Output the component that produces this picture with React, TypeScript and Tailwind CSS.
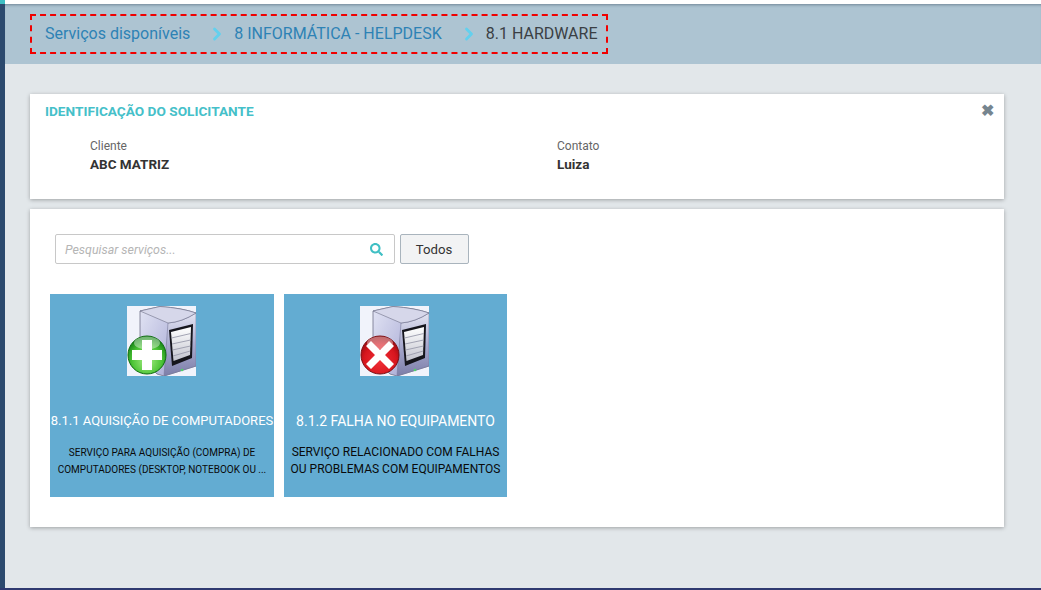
import { ChevronRight } from 'lucide-react';
import { FaSearch } from 'react-icons/fa';

// Server tower drawing shared by both service tiles
function ServerIcon({ kind }: { kind: 'add' | 'error' }) {
  const id = kind === 'add' ? 'a' : 'e';
  return (
    <svg viewBox="0 0 69 70" className={kind === 'add' ? 'mr-[1px] block h-[70px] w-[69px]' : 'mr-[2px] block h-[70px] w-[69px]'}>
      <defs>
        <linearGradient id={`side-${id}`} x1="0" y1="0" x2="1" y2="0.6">
          <stop offset="0" stopColor="#e2e4f4" />
          <stop offset="1" stopColor="#a0a2d0" />
        </linearGradient>
        <linearGradient id={`front-${id}`} x1="0" y1="0" x2="0" y2="1">
          <stop offset="0" stopColor="#e4e5f2" />
          <stop offset="0.5" stopColor="#a9abcf" />
          <stop offset="1" stopColor="#7c7ea8" />
        </linearGradient>
        <linearGradient id={`bay-${id}`} x1="0" y1="0" x2="0" y2="1">
          <stop offset="0" stopColor="#ffffff" />
          <stop offset="1" stopColor="#c2c3ce" />
        </linearGradient>
        <radialGradient id={`ball-${id}`} cx="0.5" cy="0.65" r="0.65">
          {kind === 'add' ? <stop offset="0" stopColor="#a6ec86" /> : <stop offset="0" stopColor="#f03038" />}
          {kind === 'add' ? <stop offset="0.6" stopColor="#4cc436" /> : <stop offset="0.65" stopColor="#d8161e" />}
          {kind === 'add' ? <stop offset="1" stopColor="#0c7a10" /> : <stop offset="1" stopColor="#8e0a10" />}
        </radialGradient>
      </defs>
      <rect width="69" height="70" fill="#f1f3fb" />
      <path d="M13 5 L33 0.5 Q55 2 69 7 L69 60 L37 70 L30 68 L13 50 Z" fill={`url(#side-${id})`} stroke="#6f7088" strokeWidth="0.8" />
      <path d="M41 17 Q55 16 69 7 L69 60 L37 70 Z" fill={`url(#front-${id})`} stroke="#77789a" strokeWidth="0.6" />
      <path d="M13 5 L33 0.5 Q55 2 69 7 Q55 16 41 17 Z" fill="#d6d7ea" stroke="#6f7088" strokeWidth="0.6" />
      <path d="M42 24 L66 18 L65 52 L45 60 Z" fill="#15151c" />
      <path d="M44 26 L64 21 L63 49 L46.5 55 Z" fill={`url(#bay-${id})`} />
      <path d="M44.5 32 L63.8 27.5 M45 38 L63.6 34 M45.5 44 L63.4 40 M46 50 L63.2 45" stroke="#9a9bab" strokeWidth="0.9" fill="none" />
      <circle cx="55" cy="64" r="1.3" fill="#4fd06a" />
      <circle cx="20" cy="49" r="19" fill={`url(#ball-${id})`} stroke={kind === 'add' ? '#0b6a0d' : '#7c0a10'} strokeWidth="1" />
      <ellipse cx="20" cy="37" rx="13" ry="6.5" fill="#ffffff" opacity="0.4" />
      {kind === 'add' ? (
        <path d="M15 34 H25 V44 H35 V54 H25 V64 H15 V54 H5 V44 H15 Z" fill="#ffffff" />
      ) : (
        <path d="M11 35 L20 44 L29 35 L34 40 L25 49 L34 58 L29 63 L20 54 L11 63 L6 58 L15 49 L6 40 Z" fill="#ffffff" />
      )}
    </svg>
  );
}

interface Service {
  code: string;
  kind: 'add' | 'error';
  title: string;
  description: string[];
}

const SERVICES: Service[] = [
  {
    code: '8.1.1',
    kind: 'add',
    title: 'AQUISIÇÃO DE COMPUTADORES',
    description: ['SERVIÇO PARA AQUISIÇÃO (COMPRA) DE', 'COMPUTADORES (DESKTOP, NOTEBOOK OU ...'],
  },
  {
    code: '8.1.2',
    kind: 'error',
    title: 'FALHA NO EQUIPAMENTO',
    description: ['SERVIÇO RELACIONADO COM FALHAS', 'OU PROBLEMAS COM EQUIPAMENTOS'],
  },
];

function ServiceTile({ service }: { service: Service }) {
  const small = service.kind === 'add';
  return (
    <div className={small ? 'flex h-[203px] w-[224px] flex-col items-center bg-[#63acd2] pt-3' : 'flex h-[203px] w-[223px] flex-col items-center bg-[#63acd2] pt-3'}>
      <ServerIcon kind={service.kind} />
      <div className={small ? 'mt-[36px] whitespace-nowrap text-[13px] leading-[18px] text-white' : 'mt-[36px] whitespace-nowrap text-[14px] leading-[18px] text-white'}>
        {service.code} {service.title}
      </div>
      <div
        className={
          small
            ? 'mt-[14px] text-center text-[10px] leading-[17px] whitespace-nowrap text-[#0a0a0a]'
            : 'mt-[14px] text-center text-[12px] leading-[17px] whitespace-nowrap text-[#0a0a0a]'
        }
      >
        {service.description.map((line) => (
          <div key={line}>{line}</div>
        ))}
      </div>
    </div>
  );
}

export default function App() {
  return (
    <div className="flex h-[590px] w-full flex-col overflow-hidden bg-[#e2e7ea] font-['Roboto',sans-serif]">
      <div className="flex min-h-0 flex-1">
        <div className="flex w-[5px] flex-col bg-[#2c4a6e]">
          <div className="h-[4px] bg-[#3fbfc4]" />
        </div>
        <div className="min-w-0 flex-1">
          <div className="h-[4px] bg-white" />
          <header className="flex h-[60px] items-center bg-[#adc4d2] pl-[25px] shadow-[inset_0_3px_3px_-2px_rgba(60,80,100,0.55)]">
            <nav className="flex h-[40px] w-[578px] items-center border-2 border-dashed border-[#f00000] pl-[13px] text-[16px]">
              <span className="text-[#2d82b5]">Serviços disponíveis</span>
              <ChevronRight className="ml-[17px] mr-[7px] h-[20px] w-[20px] text-[#63d0ee]" strokeWidth={3.5} />
              <span className="text-[#2d82b5]">8 INFORMÁTICA - HELPDESK</span>
              <ChevronRight className="ml-[17px] mr-[7px] h-[20px] w-[20px] text-[#63d0ee]" strokeWidth={3.5} />
              <span className="text-[#3a3f44]">8.1 HARDWARE</span>
            </nav>
          </header>

          <main className="flex flex-col gap-[10px] pl-[25px] pr-[37px] pt-[30px]">
            <section className="relative h-[105px] bg-white pl-[15px] pt-[10px] shadow-[0_1px_4px_rgba(0,0,0,0.3)]">
              <h2 className="text-[13.65px] leading-[15px] font-bold text-[#45c0c9]">IDENTIFICAÇÃO DO SOLICITANTE</h2>
              <span className="absolute right-[10px] top-[8px] text-[16px] leading-[18px] font-bold text-[#76858f]">✖</span>
              <div className="mt-[20px] flex pl-[45px] leading-[15px]">
                <div className="w-[467px]">
                  <div className="text-[12px] text-[#666]">Cliente</div>
                  <div className="mt-[3px] text-[13.5px] font-bold text-[#333]">ABC MATRIZ</div>
                </div>
                <div>
                  <div className="text-[12px] text-[#666]">Contato</div>
                  <div className="mt-[3px] text-[13.5px] font-bold text-[#333]">Luiza</div>
                </div>
              </div>
            </section>

            <section className="h-[318px] bg-white pl-[20px] pt-[25px] shadow-[0_1px_4px_rgba(0,0,0,0.3)]">
              <div className="flex items-center gap-[5px] pl-[5px]">
                <div className="flex h-[30px] w-[340px] items-center justify-between rounded-[2px] border border-[#c8c8c8] pl-[9px] pr-[11px]">
                  <span className="pt-[2px] text-[12.4px] italic text-[#b5b5b5]">Pesquisar serviços...</span>
                  <FaSearch className="h-[13px] w-[13px] text-[#3fbfc4]" />
                </div>
                <button className="h-[30px] w-[69px] rounded-[2px] border border-[#a9b4bd] bg-[#f2f3f4] pr-[1px] pt-[1px] text-[13.2px] text-[#333]">
                  Todos
                </button>
              </div>
              <div className="mt-[30px] flex gap-[10px]">
                {SERVICES.map((service) => (
                  <ServiceTile key={service.code} service={service} />
                ))}
              </div>
            </section>
          </main>
        </div>
      </div>
      <div className="h-[2px] bg-[#2f3a70]" />
    </div>
  );
}
